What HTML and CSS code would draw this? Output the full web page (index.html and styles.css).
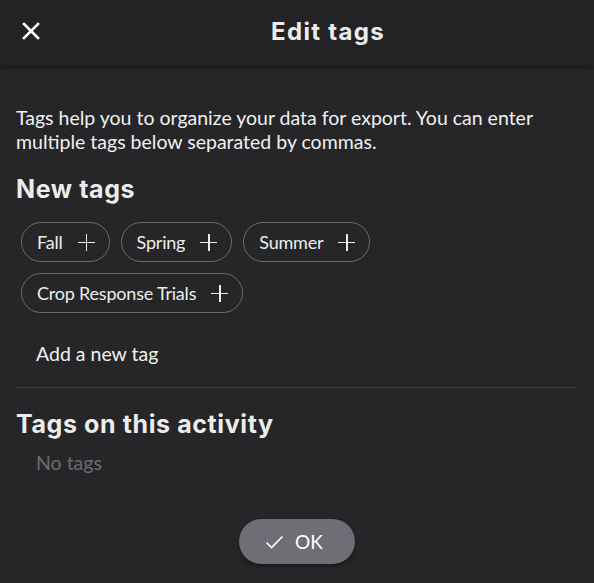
FILE: index.html
```html
<!DOCTYPE html>
<html>
<head>
<meta charset="utf-8">
<link rel="stylesheet" href="styles.css">
</head>
<body>
<div class="app">
  <header class="bar">
    <button class="close" aria-label="Close">
      <svg width="18" height="18" viewBox="0 0 18 18"><path d="M2 2L16 16M16 2L2 16" stroke="#fff" stroke-width="2.6" stroke-linecap="square"/></svg>
    </button>
    <h1 class="title">Edit tags</h1>
  </header>
  <main class="content">
    <p class="intro">Tags help you to organize your data for export. You can enter multiple tags below separated by commas.</p>
    <h2 class="heading">New tags</h2>
    <div class="chips">
      <span class="chip">Fall <span class="plus"></span></span>
      <span class="chip">Spring <span class="plus"></span></span>
      <span class="chip">Summer <span class="plus"></span></span>
      <span class="chip">Crop Response Trials <span class="plus"></span></span>
    </div>
    <div class="add">Add a new tag</div>
    <hr class="divider">
    <h2 class="heading">Tags on this activity</h2>
    <div class="empty">No tags</div>
    <div class="actions">
      <button class="ok">
        <svg width="19" height="14" viewBox="0 0 19 14"><path d="M1.5 7.5L6.5 12.5L17.5 1.5" fill="none" stroke="#fff" stroke-width="1.6"/></svg>
        OK
      </button>
    </div>
  </main>
</div>
</body>
</html>
```
FILE: styles.css
```css
* { box-sizing: border-box; }
html, body { margin: 0; padding: 0; }
body {
  background: #262628;
  font-family: "Lato", "Liberation Sans", sans-serif;
  color: #f2f2f2;
  width: 594px;
  height: 583px;
  overflow: hidden;
}
.bar {
  height: 66px;
  background: #232325;
  display: flex;
  align-items: center;
  justify-content: center;
  position: relative;
  padding-left: 62px;
  box-shadow: 0 2px 4px rgba(0,0,0,0.35);
}
.close {
  position: absolute;
  left: 22px;
  top: 22px;
  padding: 0;
  border: 0;
  background: none;
  width: 18px;
  height: 18px;
  display: flex;
}
.title {
  margin: 0;
  font-family: "Inter", "Open Sans", sans-serif;
  font-weight: 700;
  font-size: 24px;
  color: #ececec;
  letter-spacing: 1.3px;
  padding-bottom: 4px;
}
.content {
  padding: 40px 18px 0 16px;
}
.intro {
  margin: 0;
  font-size: 19.5px;
  line-height: 24px;
  color: #f0f0f0;
}
.heading {
  margin: 18px 0 0;
  font-family: "Inter", "Open Sans", sans-serif;
  font-weight: 700;
  font-size: 25px;
  line-height: 34px;
  letter-spacing: 0.6px;
  color: #ececec;
}
.chips {
  display: flex;
  flex-wrap: wrap;
  gap: 11px;
  padding: 16px 0 0 5px;
  width: 380px;
}
.chip {
  display: inline-flex;
  align-items: center;
  height: 40px;
  border: 1px solid #6b6b70;
  border-radius: 20px;
  padding: 0 14px 0 15px;
  font-size: 18px;
  letter-spacing: -0.2px;
  color: #ededed;
  gap: 15px;
}
.plus {
  width: 17px;
  height: 17px;
  position: relative;
  display: inline-block;
}
.plus::before, .plus::after {
  content: "";
  position: absolute;
  background: #ededed;
}
.plus::before { left: 0; right: 0; top: 8px; height: 1.5px; }
.plus::after { top: 0; bottom: 0; left: 8px; width: 1.5px; }
.add {
  padding: 29px 0 0 20px;
  font-size: 19.5px;
  line-height: 24px;
  color: #f0f0f0;
}
.divider {
  border: 0;
  border-top: 1px solid #3c3c40;
  margin: 21px 0 0;
}
.divider + .heading { margin-top: 19px; }
.empty {
  padding: 10px 0 0 20px;
  font-size: 19.5px;
  line-height: 24px;
  color: #6c6c70;
}
.actions {
  display: flex;
  justify-content: center;
  padding: 44px 0 0;
  margin-right: -2px;
}
.ok {
  width: 116px;
  height: 45px;
  border: 0;
  border-radius: 23px;
  background: #6e6e76;
  color: #fff;
  font-family: "Lato", sans-serif;
  font-size: 19px;
  display: flex;
  align-items: center;
  justify-content: center;
  gap: 11px;
  box-shadow: 0 2px 4px rgba(0,0,0,0.4);
  padding: 0 6px 0 0;
}
```
